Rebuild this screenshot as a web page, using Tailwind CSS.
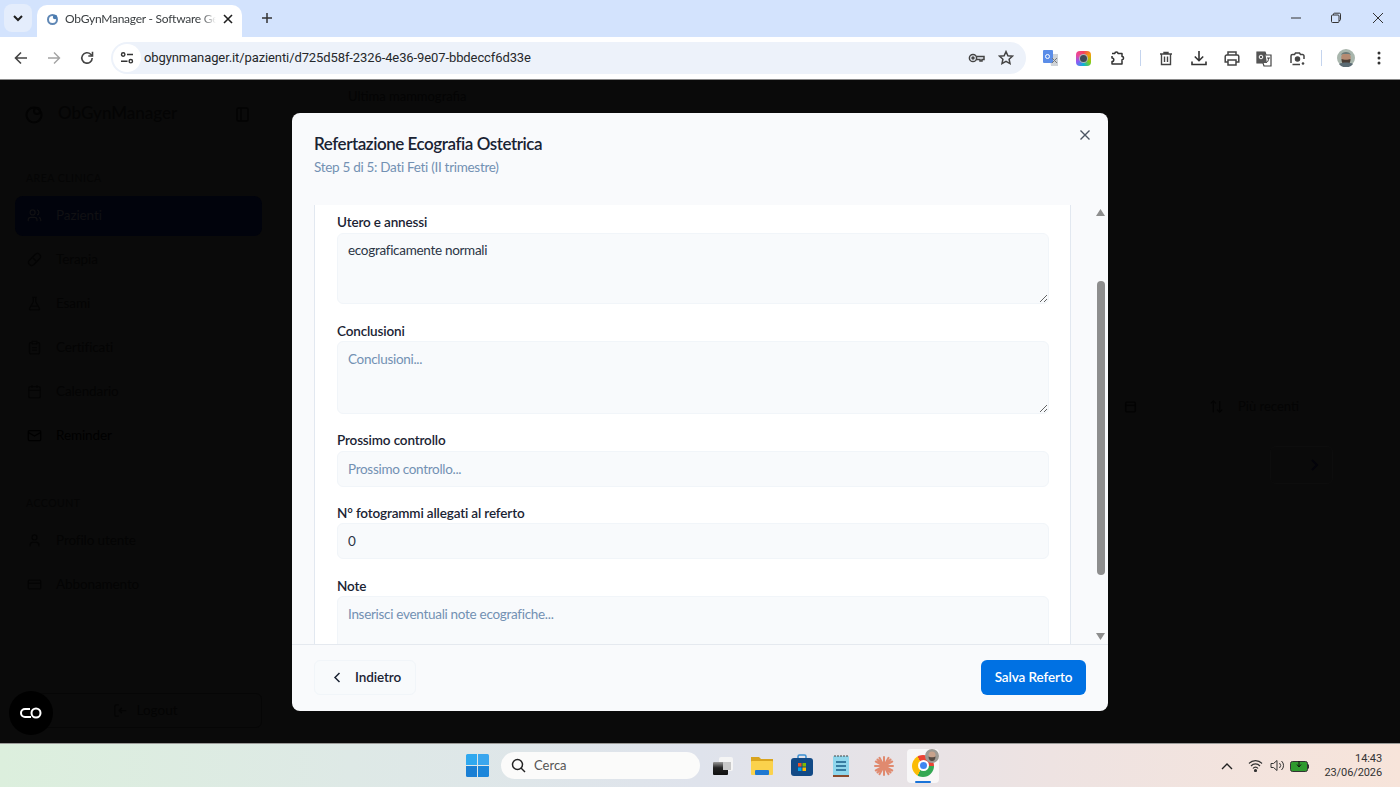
<!DOCTYPE html>
<html lang="it">
<head>
<meta charset="utf-8">
<title>ObGynManager</title>
<script src="https://cdn.jsdelivr.net/npm/@tailwindcss/browser@4"></script>
</head>
<body class="w-[1400px] h-[787px] overflow-hidden font-['Lato','Roboto',sans-serif]">
<div class="flex flex-col w-[1400px] h-[787px]">

  <!-- Tab strip -->
  <div class="h-[37px] shrink-0 bg-[#d3e3fd] flex items-end relative">
    <div class="absolute left-[4px] top-[4px] w-[28px] h-[28px] rounded-lg bg-[#e4edfc] flex items-center justify-center">
      <svg class="w-[12px] h-[12px]" viewBox="0 0 12 12" fill="none" stroke="#1f1f1f" stroke-width="2"><path d="M2 4l4 4 4-4"/></svg>
    </div>
    <div class="ml-[37px] w-[205px] h-[32px] bg-white rounded-t-[10px] flex items-center pl-[9px] pr-[3px] pb-[5px]">
      <svg class="w-[14px] h-[14px] shrink-0" viewBox="0 0 14 14" fill="none"><circle cx="6.500" cy="7.500" r="4.500" stroke="#5f87b5" stroke-width="2"/><circle cx="9" cy="5" r="2.200" fill="#4a7bb0"/></svg>
      <span class="ml-[5px] w-[151px] overflow-hidden whitespace-nowrap text-[12px] tracking-[-0.25px] text-[#3c4043] [mask-image:linear-gradient(90deg,#000_90%,transparent)]">ObGynManager - Software Gest</span>
      <svg class="ml-[6px] w-[12px] h-[12px] shrink-0" viewBox="0 0 12 12" fill="none" stroke="#1f1f1f" stroke-width="1.600"><path d="M2 2l8 8M10 2l-8 8"/></svg>
    </div>
    <svg class="ml-[19px] mb-[13px] w-[12px] h-[12px]" viewBox="0 0 12 12" fill="none" stroke="#333" stroke-width="1.500"><path d="M6 1v10M1 6h10"/></svg>
    <div class="ml-auto flex items-center h-[37px] pb-[1px]">
      <svg class="w-[12px] h-[12px] mr-[28px]" viewBox="0 0 12 12" fill="none" stroke="#333" stroke-width="1"><path d="M1 6h10"/></svg>
      <svg class="w-[12px] h-[12px] mr-[30px]" viewBox="0 0 12 12" fill="none" stroke="#333" stroke-width="1"><rect x="1.500" y="3" width="7.500" height="7.500" rx="1"/><path d="M3.500 3V2.200a1 1 0 0 1 1-1h5a1 1 0 0 1 1 1v5.300a1 1 0 0 1-1 1H9"/></svg>
      <svg class="w-[12px] h-[12px] mr-[16px]" viewBox="0 0 12 12" fill="none" stroke="#333" stroke-width="1"><path d="M1 1l10 10M11 1L1 11"/></svg>
    </div>
  </div>

  <!-- Toolbar -->
  <div class="h-[43px] shrink-0 bg-white border-b border-[#8a8a8a] flex items-center rounded-t-[8px] pl-[4px]">
    <div class="w-[33px] flex justify-center"><svg class="w-[16px] h-[16px]" viewBox="0 0 16 16" fill="none" stroke="#444" stroke-width="1.600"><path d="M14 8H2.500M8 2.500L2.500 8 8 13.500"/></svg></div>
    <div class="w-[33px] flex justify-center"><svg class="w-[16px] h-[16px]" viewBox="0 0 16 16" fill="none" stroke="#a3a3a3" stroke-width="1.400"><path d="M2 8h11.500M8 2.500L13.500 8 8 13.500"/></svg></div>
    <div class="w-[33px] flex justify-center"><svg class="w-[16px] h-[16px]" viewBox="0 0 16 16" fill="none" stroke="#444" stroke-width="1.600"><path d="M13.200 8a5.200 5.200 0 1 1-1.500-3.700L13.500 6"/><path d="M13.500 1.800V6H9.300"/></svg></div>
    <div class="ml-[8px] w-[915px] h-[32px] rounded-full bg-[#edf2fa] flex items-center pl-[2px] pr-[12px]">
      <div class="w-[28px] h-[28px] rounded-full bg-white flex items-center justify-center">
        <svg class="w-[14px] h-[14px]" viewBox="0 0 14 14" fill="none" stroke="#333" stroke-width="1.400"><circle cx="3.200" cy="3.500" r="1.700"/><path d="M7 3.500h6M1 10.200h6.500"/><circle cx="10.800" cy="10.200" r="1.700"/></svg>
      </div>
      <span class="ml-[3px] font-['Roboto',sans-serif] text-[13px] tracking-[-0.1px] text-[#26282b] whitespace-nowrap">obgynmanager.it/pazienti/d725d58f-2326-4e36-9e07-bbdeccf6d33e</span>
      <div class="ml-auto flex items-center gap-[13px]">
        <svg class="w-[17px] h-[12px]" viewBox="0 0 17 12" fill="none" stroke="#444" stroke-width="1.500"><circle cx="5" cy="6" r="3.600"/><circle cx="5" cy="6" r="1" fill="#444"/><path d="M8.600 4.500h7.400v3h-2v1.500h-2V7.500H8.600"/></svg>
        <svg class="w-[16px] h-[16px]" viewBox="0 0 16 16" fill="none" stroke="#444" stroke-width="1.500"><path d="M8 1.600l1.900 4.100 4.500.5-3.300 3 .9 4.400L8 11.400l-4 2.200.9-4.400-3.300-3 4.500-.5z"/></svg>
      </div>
    </div>
    <div class="ml-[8px] w-[33px] flex justify-center">
      <svg class="w-[17px] h-[18px]" viewBox="0 0 17 18"><path d="M7 5h9v12H9z" fill="#cfd3d8"/><rect x="1" y="1" width="10" height="13" rx="1" fill="#5b8de8"/><circle cx="5.500" cy="7.500" r="2" fill="none" stroke="#fff" stroke-width="1"/><path d="M10 9l5 5M15 9l-5 5" stroke="#777" stroke-width="1"/></svg>
    </div>
    <div class="w-[33px] flex justify-center">
      <div class="w-[15px] h-[15px] rounded-[4px] bg-[conic-gradient(#f43f5e,#f59e0b,#84cc16,#06b6d4,#8b5cf6,#ec4899,#f43f5e)] flex items-center justify-center"><div class="w-[9px] h-[9px] rounded-full bg-[#3f4a57] border border-white/60"></div></div>
    </div>
    <div class="w-[33px] flex justify-center">
      <svg class="w-[16px] h-[16px]" viewBox="0 0 16 16" fill="none" stroke="#333" stroke-width="1.500" stroke-linejoin="round"><path d="M3 3.500h2.800a1.600 1.600 0 0 1 3.200 0H13v3a1.600 1.600 0 0 1 0 3.200V14H3v-2.400a1.800 1.800 0 0 0 0-3.600V6"/></svg>
    </div>
    <div class="ml-[7px] mr-[8px] w-[1px] h-[16px] bg-[#c4d4ee]"></div>
    <div class="w-[33px] flex justify-center">
      <svg class="w-[14px] h-[15px]" viewBox="0 0 14 15" fill="none" stroke="#444" stroke-width="1.400"><path d="M1 3h12M5 3V1.500h4V3M2.500 3v10.500h9V3M5.500 5.500v5.500M8.500 5.500v5.500"/></svg>
    </div>
    <div class="w-[33px] flex justify-center">
      <svg class="w-[16px] h-[16px]" viewBox="0 0 16 16" fill="none" stroke="#333" stroke-width="1.600"><path d="M8 1v9.500M3.800 6.500L8 10.700l4.200-4.200M1 11.500v3h14v-3"/></svg>
    </div>
    <div class="w-[33px] flex justify-center">
      <svg class="w-[16px] h-[15px]" viewBox="0 0 16 15" fill="none" stroke="#444" stroke-width="1.500"><path d="M4 4V1h8v3M4 11H1.200V5.500A1.500 1.500 0 0 1 2.700 4h10.600a1.500 1.500 0 0 1 1.500 1.500V11H12"/><rect x="4" y="9" width="8" height="5"/></svg>
    </div>
    <div class="w-[33px] flex justify-center">
      <svg class="w-[17px] h-[17px]" viewBox="0 0 17 17"><path d="M1 2h8l1 3h5v11H8l-1-3H1z" fill="none" stroke="#444" stroke-width="1.200"/><path d="M1 2h8l2 11H1z" fill="#555"/><circle cx="5" cy="7" r="1.800" fill="none" stroke="#fff"/><path d="M11 8h3M12.500 8c0 3-1 4-2 4.500" stroke="#444" fill="none"/></svg>
    </div>
    <div class="w-[33px] flex justify-center">
      <svg class="w-[15px] h-[15px]" viewBox="0 0 15 15" fill="none" stroke="#444" stroke-width="1.500"><path d="M1 12V5a1.500 1.500 0 0 1 1.500-1.500h2L5.500 2h4l1 1.500h2A1.500 1.500 0 0 1 14 5v3M10 13.500H2.500"/><circle cx="7.500" cy="8" r="2" fill="#444"/><circle cx="13" cy="12.500" r="1.300" fill="#444" stroke="none"/></svg>
    </div>
    <div class="ml-[7px] mr-[7px] w-[1px] h-[16px] bg-[#c4d4ee]"></div>
    <div class="w-[33px] flex justify-center">
      <svg class="w-[18px] h-[18px]" viewBox="0 0 18 18"><circle cx="9" cy="9" r="9" fill="#a9b6ad"/><circle cx="9" cy="8.500" r="4.800" fill="#b58b72"/><path d="M4 6c1-4 9-4 10 0l-2-1H6z" fill="#6b7a78"/><path d="M4.500 10c2 1 7 1 9 0 0 4-2 6-4.500 6S4.500 14 4.500 10z" fill="#4a3c34"/><path d="M2 15c3-2 11-2 14 0a9 9 0 0 1-14 0z" fill="#5b6b74"/></svg>
    </div>
    <div class="w-[33px] flex justify-center">
      <svg class="w-[4px] h-[14px]" viewBox="0 0 4 14" fill="#333"><circle cx="2" cy="2" r="1.500"/><circle cx="2" cy="7" r="1.500"/><circle cx="2" cy="12" r="1.500"/></svg>
    </div>
  </div>

  <!-- Page -->
  <div class="relative flex-1 min-h-0 bg-[#0a0a0a] flex">
    <!-- Sidebar -->
    <aside class="w-[277px] shrink-0 px-[15px] flex flex-col text-[#040404]">
      <div class="h-[34px] mt-[17px] flex items-center pl-[10px]">
        <svg class="w-[19px] h-[19px]" viewBox="0 0 19 19" fill="none" stroke="#030303" stroke-width="2"><circle cx="9" cy="10" r="7.500"/><circle cx="12" cy="6" r="3"/></svg>
        <span class="ml-[14px] text-[17px] font-medium leading-[24px] pb-[2px]">ObGynManager</span>
        <svg class="ml-auto mr-[13px] w-[13px] h-[15px]" viewBox="0 0 13 15" fill="none" stroke="#030303" stroke-width="1.500"><rect x="1" y="1" width="11" height="13" rx="1.500"/><path d="M5 1v13"/></svg>
      </div>
      <div class="mt-[40px] ml-[11px] text-[10.500px] tracking-[0.5px] text-[#050505] leading-[14px]">AREA CLINICA</div>
      <nav class="mt-[11px] flex flex-col text-[13.500px] tracking-[-0.1px]">
        <div class="h-[40px] rounded-lg bg-[#01030c] flex items-center pl-[12px] pb-[1px] text-[#101013]">
          <svg class="w-[15px] h-[15px] mr-[14px]" viewBox="0 0 24 24" fill="none" stroke="#101013" stroke-width="2"><path d="M16 21v-2a4 4 0 0 0-4-4H6a4 4 0 0 0-4 4v2"/><circle cx="9" cy="7" r="4"/><path d="M22 21v-2a4 4 0 0 0-3-3.900M16 3.100a4 4 0 0 1 0 7.800"/></svg>Pazienti
        </div>
        <div class="h-[44px] mt-[1px] flex items-center pl-[12px]">
          <svg class="w-[15px] h-[15px] mr-[14px]" viewBox="0 0 24 24" fill="none" stroke="#040404" stroke-width="2"><path d="M10.500 20.500l10-10a5 5 0 0 0-7-7l-10 10a5 5 0 0 0 7 7zM8.500 8.500l7 7"/></svg>Terapia
        </div>
        <div class="h-[44px] flex items-center pl-[12px]">
          <svg class="w-[15px] h-[15px] mr-[14px]" viewBox="0 0 24 24" fill="none" stroke="#040404" stroke-width="2"><path d="M10 2v7.500L4 20a1.500 1.500 0 0 0 1.500 2h13a1.500 1.500 0 0 0 1.500-2L14 9.500V2M8.500 2h7M7 16h10"/></svg>Esami
        </div>
        <div class="h-[44px] flex items-center pl-[12px]">
          <svg class="w-[15px] h-[15px] mr-[14px]" viewBox="0 0 24 24" fill="none" stroke="#040404" stroke-width="2"><rect x="8" y="2" width="8" height="4" rx="1"/><path d="M16 4h2a2 2 0 0 1 2 2v14a2 2 0 0 1-2 2H6a2 2 0 0 1-2-2V6a2 2 0 0 1 2-2h2M8 12h8M8 16h8"/></svg>Certificati
        </div>
        <div class="h-[44px] flex items-center pl-[12px]">
          <svg class="w-[15px] h-[15px] mr-[14px]" viewBox="0 0 24 24" fill="none" stroke="#040404" stroke-width="2"><rect x="3" y="4" width="18" height="18" rx="2"/><path d="M16 2v4M8 2v4M3 10h18"/></svg>Calendario
        </div>
        <div class="h-[44px] flex items-center pl-[12px]">
          <svg class="w-[15px] h-[15px] mr-[14px]" viewBox="0 0 24 24" fill="none" stroke="#000" stroke-width="2"><rect x="2" y="4" width="20" height="16" rx="2"/><path d="M22 7l-10 6L2 7"/></svg><span class="text-black">Reminder</span>
        </div>
      </nav>
      <div class="mt-[39px] ml-[11px] text-[10.500px] tracking-[0.5px] text-[#050505] leading-[14px]">ACCOUNT</div>
      <nav class="mt-[8px] flex flex-col text-[13.500px] tracking-[-0.1px]">
        <div class="h-[44px] flex items-center pl-[12px]">
          <svg class="w-[15px] h-[15px] mr-[14px]" viewBox="0 0 24 24" fill="none" stroke="#040404" stroke-width="2"><circle cx="12" cy="7" r="4"/><path d="M19 21v-2a4 4 0 0 0-4-4H9a4 4 0 0 0-4 4v2"/></svg>Profilo utente
        </div>
        <div class="h-[44px] flex items-center pl-[12px]">
          <svg class="w-[15px] h-[15px] mr-[14px]" viewBox="0 0 24 24" fill="none" stroke="#040404" stroke-width="2"><rect x="2" y="5" width="20" height="14" rx="2"/><path d="M2 10h20"/></svg>Abbonamento
        </div>
      </nav>
      <div class="mt-auto mb-[15px] ml-[13px] h-[35px] rounded-md border border-[#060606] flex items-center justify-center text-[13.500px]">
        <svg class="w-[15px] h-[15px] mr-[9px]" viewBox="0 0 24 24" fill="none" stroke="#040404" stroke-width="2"><path d="M9 21H5a2 2 0 0 1-2-2V5a2 2 0 0 1 2-2h4M10 12h11M14 8l-4 4 4 4"/></svg>Logout
      </div>
    </aside>

    <!-- Dimmed main content -->
    <main class="flex-1 min-w-0 text-[13px] text-[#040404]">
      <div class="pl-[71px] pt-[8px] leading-[17px]">Ultima mammografia</div>
      <div class="mt-[292px] flex items-center pl-[847px]">
        <svg class="w-[13px] h-[13px]" viewBox="0 0 24 24" fill="none" stroke="#030303" stroke-width="2.500"><rect x="3" y="4" width="18" height="18" rx="2"/><path d="M3 10h18"/></svg>
        <svg class="ml-[72px] w-[15px] h-[15px]" viewBox="0 0 24 24" fill="none" stroke="#030303" stroke-width="2"><path d="M7 3v18M3 7l4-4 4 4M17 21V3M13 17l4 4 4-4"/></svg>
        <span class="ml-[14px]">Più recenti</span>
      </div>
      <div class="mt-[29px] ml-[993px] w-[63px] h-[38px] rounded-md border border-[#0d0d0d] flex items-center justify-end pr-[12px]">
        <svg class="w-[12px] h-[12px]" viewBox="0 0 12 12" fill="none" stroke="#03030a" stroke-width="2"><path d="M4 1l5 5-5 5"/></svg>
      </div>
    </main>

    <!-- Floating bubble -->
    <div class="absolute left-[9px] top-[611px] w-[44px] h-[44px] rounded-full bg-black flex items-center justify-center">
      <svg class="w-[24px] h-[12px]" viewBox="0 0 24 12" fill="none" stroke="#fff" stroke-width="2"><path d="M11 2H6a4 4 0 0 0 0 8h6"/><circle cx="17" cy="6" r="4.500"/></svg>
    </div>

    <!-- Modal -->
    <div class="absolute left-[292px] top-[33px] w-[816px] h-[598px] rounded-lg bg-[#f9fafc] flex flex-col overflow-hidden">
      <header class="h-[92px] shrink-0 relative pl-[22px] pt-[19px]">
        <h2 class="text-[17px] leading-[24px] font-semibold text-[#1a2333] tracking-[-0.45px]">Refertazione Ecografia Ostetrica</h2>
        <p class="text-[13.500px] leading-[20px] mt-[1px] text-[#7391b3] tracking-[-0.3px]">Step 5 di 5: Dati Feti (II trimestre)</p>
        <svg class="absolute right-[16px] top-[15px] w-[14px] h-[14px]" viewBox="0 0 14 14" fill="none" stroke="#4b5563" stroke-width="1.400"><path d="M2.500 2.500l9 9M11.500 2.500l-9 9"/></svg>
      </header>
      <div class="flex-1 min-h-0 flex pl-[22px]">
        <div class="w-[757px] overflow-hidden bg-white border-x border-[#e2e8f0] pl-[22px] pr-[21px] pt-[8px] text-[13.500px] tracking-[-0.3px]">
          <label class="block font-semibold tracking-[-0.15px] text-[#1a2333] leading-[18px] mb-[2px]">Utero e annessi</label>
          <textarea class="block w-full h-[71px] rounded-md bg-[#f8fafc] border border-[#f1f5f9] px-[10px] py-[6px] leading-[20px] text-[#2b3545] outline-none">ecograficamente normali</textarea>
          <label class="block mt-[18px] font-semibold tracking-[-0.15px] text-[#1a2333] leading-[18px] mb-[1px]">Conclusioni</label>
          <textarea placeholder="Conclusioni..." class="block w-full h-[73px] rounded-md bg-[#f8fafc] border border-[#f1f5f9] px-[10px] py-[7px] leading-[20px] placeholder:text-[#7391b3] outline-none"></textarea>
          <label class="block mt-[17px] font-semibold tracking-[-0.15px] text-[#1a2333] leading-[18px] mb-[2px]">Prossimo controllo</label>
          <input placeholder="Prossimo controllo..." class="block w-full h-[36px] rounded-md bg-[#f8fafc] border border-[#f1f5f9] px-[10px] placeholder:text-[#7391b3] outline-none">
          <label class="block mt-[17px] font-semibold tracking-[-0.15px] text-[#1a2333] leading-[18px] mb-[1px]">N° fotogrammi allegati al referto</label>
          <input value="0" class="block w-full h-[36px] rounded-md bg-[#f8fafc] border border-[#f1f5f9] px-[10px] text-[#2b3545] outline-none">
          <label class="block mt-[18px] font-semibold tracking-[-0.15px] text-[#1a2333] leading-[18px] mb-[1px]">Note</label>
          <textarea placeholder="Inserisci eventuali note ecografiche..." class="block w-full h-[74px] rounded-md bg-[#f8fafc] border border-[#f1f5f9] px-[10px] py-[7px] leading-[20px] placeholder:text-[#7391b3] outline-none"></textarea>
        </div>
        <!-- Scrollbar -->
        <div class="ml-[25px] w-[9px] flex flex-col items-center pt-[4px] pb-[4px]">
          <svg class="w-[9px] h-[7px] shrink-0" viewBox="0 0 9 7" fill="#8e8e8e"><path d="M4.500 0L9 7H0z"/></svg>
          <div class="mt-[65px] w-[8px] h-[294px] rounded-full bg-[#8e8e8e] shrink-0"></div>
          <svg class="mt-auto w-[9px] h-[7px] shrink-0" viewBox="0 0 9 7" fill="#8e8e8e"><path d="M4.500 7L9 0H0z"/></svg>
        </div>
      </div>
      <footer class="h-[67px] shrink-0 border-t border-[#e5e9ef] flex items-center justify-between px-[22px] pb-[2px]">
        <button class="w-[102px] h-[35px] rounded-md bg-[#f8fafc] border border-[#f1f5f9] flex items-center pl-[18px] text-[13.500px] font-semibold tracking-[-0.1px] text-[#1a2333]">
          <svg class="w-[9px] h-[11px] mr-[13px]" viewBox="0 0 9 11" fill="none" stroke="#1a2333" stroke-width="1.500"><path d="M6.500 1L2 5.500 6.500 10"/></svg>Indietro
        </button>
        <button class="w-[105px] h-[35px] rounded-md bg-[#0071e3] text-white text-[13.500px] font-semibold tracking-[-0.1px]">Salva Referto</button>
      </footer>
    </div>
  </div>

  <!-- Taskbar -->
  <div class="h-[44px] shrink-0 border-t border-[#9a9a98] bg-[linear-gradient(90deg,#dcefdd_0%,#dee9e6_25%,#dfe3ec_50%,#eee3e2_75%,#f7e4da_100%)] flex items-center relative">
    <svg class="ml-[466px] w-[23px] h-[23px]" viewBox="0 0 23 23"><path d="M0 1.500A1.500 1.500 0 0 1 1.500 0H11v11H0z" fill="#2fa8ef"/><path d="M12 0h9.500A1.500 1.500 0 0 1 23 1.500V11H12z" fill="#3aa6ee"/><path d="M0 12h11v11H1.500A1.500 1.500 0 0 1 0 21.500z" fill="#1a7fd4"/><path d="M12 12h11v9.500a1.500 1.500 0 0 1-1.500 1.500H12z" fill="#1c86da"/></svg>
    <div class="ml-[12px] w-[199px] h-[27px] rounded-full bg-[#fbfbfa] flex items-center pl-[10px] text-[13px] text-[#555]">
      <svg class="w-[15px] h-[15px] mr-[8px]" viewBox="0 0 15 15" fill="none" stroke="#222" stroke-width="1.500"><circle cx="6.500" cy="6.500" r="5"/><path d="M10 10l4 4"/></svg>Cerca
    </div>
    <div class="ml-[13px] w-[20px] h-[18px] relative">
      <div class="absolute right-0 top-0 w-[14px] h-[14px] bg-[#f5f5f5] rounded-[2px]"></div>
      <div class="absolute left-0 bottom-0 w-[15px] h-[13px] bg-[linear-gradient(180deg,#9a9a9a_0%,#222_45%,#111_100%)] rounded-[1px]"></div>
      <div class="absolute right-[2px] top-[5px] w-[8px] h-[8px] bg-[#c8c8c8]"></div>
    </div>
    <svg class="ml-[18px] w-[22px] h-[22px]" viewBox="0 0 22 22"><path d="M0 2h8l2 2h12v4H0z" fill="#d9a41e"/><rect y="6" width="22" height="14" rx="1" fill="#fbd24c"/><rect x="4" y="15" width="14" height="5" rx="1" fill="#1f78d1"/></svg>
    <svg class="ml-[18px] w-[22px] h-[23px]" viewBox="0 0 22 23"><path d="M7 4V2.500A1.500 1.500 0 0 1 8.500 1h5A1.500 1.500 0 0 1 15 2.500V4" fill="none" stroke="#3a8fd1" stroke-width="1.500"/><rect y="4" width="22" height="18" rx="3" fill="#124a86"/><rect x="7" y="9" width="3.500" height="3.500" fill="#f25022"/><rect x="11.500" y="9" width="3.500" height="3.500" fill="#7fba00"/><rect x="7" y="13.500" width="3.500" height="3.500" fill="#00a4ef"/><rect x="11.500" y="13.500" width="3.500" height="3.500" fill="#ffb900"/></svg>
    <svg class="ml-[20px] w-[16px] h-[24px]" viewBox="0 0 16 24"><rect y="2" width="16" height="21" rx="1" fill="#8fd6ec"/><rect y="21" width="16" height="2" fill="#8a4b2c"/><path d="M2 1v2M5 1v2M8 1v2M11 1v2M14 1v2" stroke="#444" stroke-width="1"/><path d="M3 8h10M3 12h10M3 16h10" stroke="#1b5f88" stroke-width="1.500"/></svg>
    <svg class="ml-[24px] w-[22px] h-[22px]" viewBox="0 0 22 22" stroke="#e08a6f" stroke-width="2" stroke-linecap="round"><path d="M11 2v18M2 11h18M4.500 4.500l13 13M17.500 4.500l-13 13M6.500 2.800l9 16.400M15.500 2.800l-9 16.400M2.800 6.500l16.400 9M19.200 6.500l-16.400 9"/></svg>
    <div class="ml-[12px] w-[32px] h-[34px] rounded-[4px] bg-white/70 relative flex items-center justify-center">
      <div class="w-[22px] h-[22px] rounded-full bg-[conic-gradient(from_-30deg,#ea4335_0deg_120deg,#34a853_120deg_240deg,#fbbc05_240deg_360deg)] flex items-center justify-center"><div class="w-[7px] h-[7px] rounded-full bg-[#3f86f0] border-2 border-white box-content"></div></div>
      <svg class="absolute right-[0px] top-[0px] w-[14px] h-[14px]" viewBox="0 0 14 14"><circle cx="7" cy="7" r="7" fill="#9c9a94"/><circle cx="7" cy="6" r="3.500" fill="#c7a28c"/><path d="M3.500 7.500c1 1 6 1 7 0 0 3-1.500 4.500-3.500 4.500S3.500 10.500 3.500 7.500z" fill="#544a42"/></svg>
      <div class="absolute bottom-0 left-[8px] w-[16px] h-[2px] bg-[#1a73d8] rounded-full"></div>
    </div>
    <!-- Tray -->
    <svg class="ml-[282px] w-[12px] h-[8px]" viewBox="0 0 12 8" fill="none" stroke="#222" stroke-width="1.400"><path d="M1 7l5-5 5 5"/></svg>
    <svg class="ml-[15px] w-[15px] h-[13px]" viewBox="0 0 15 13" fill="none" stroke="#333" stroke-width="1.200"><path d="M1 4.500a9 9 0 0 1 13 0M3 7a6 6 0 0 1 9 0M5 9.500a3 3 0 0 1 5 0"/><circle cx="7.500" cy="11.500" r="1" fill="#333"/></svg>
    <svg class="ml-[7px] w-[15px] h-[13px]" viewBox="0 0 15 13" fill="none" stroke="#333" stroke-width="1"><path d="M1 4.500h2.500L7 1.500v10l-3.500-3H1zM9.500 4a3.500 3.500 0 0 1 0 5M11.500 2a6 6 0 0 1 0 9"/></svg>
    <svg class="ml-[5px] w-[19px] h-[12px]" viewBox="0 0 19 12"><rect x="0.500" y="1.500" width="17" height="10" rx="2" fill="#2e9a2e" stroke="#333"/><rect x="18" y="4.500" width="1" height="4" fill="#333"/><path d="M9 1v5M7 4.500l2 2.500 2-2.500" stroke="#111" stroke-width="1" fill="none"/></svg>
    <div class="ml-auto mr-[18px] flex flex-col items-end font-['Roboto',sans-serif] text-[11px] tracking-[-0.1px] leading-[14px] text-[#333]">
      <span>14:43</span><span>23/06/2026</span>
    </div>
  </div>
</div>
</body>
</html>
